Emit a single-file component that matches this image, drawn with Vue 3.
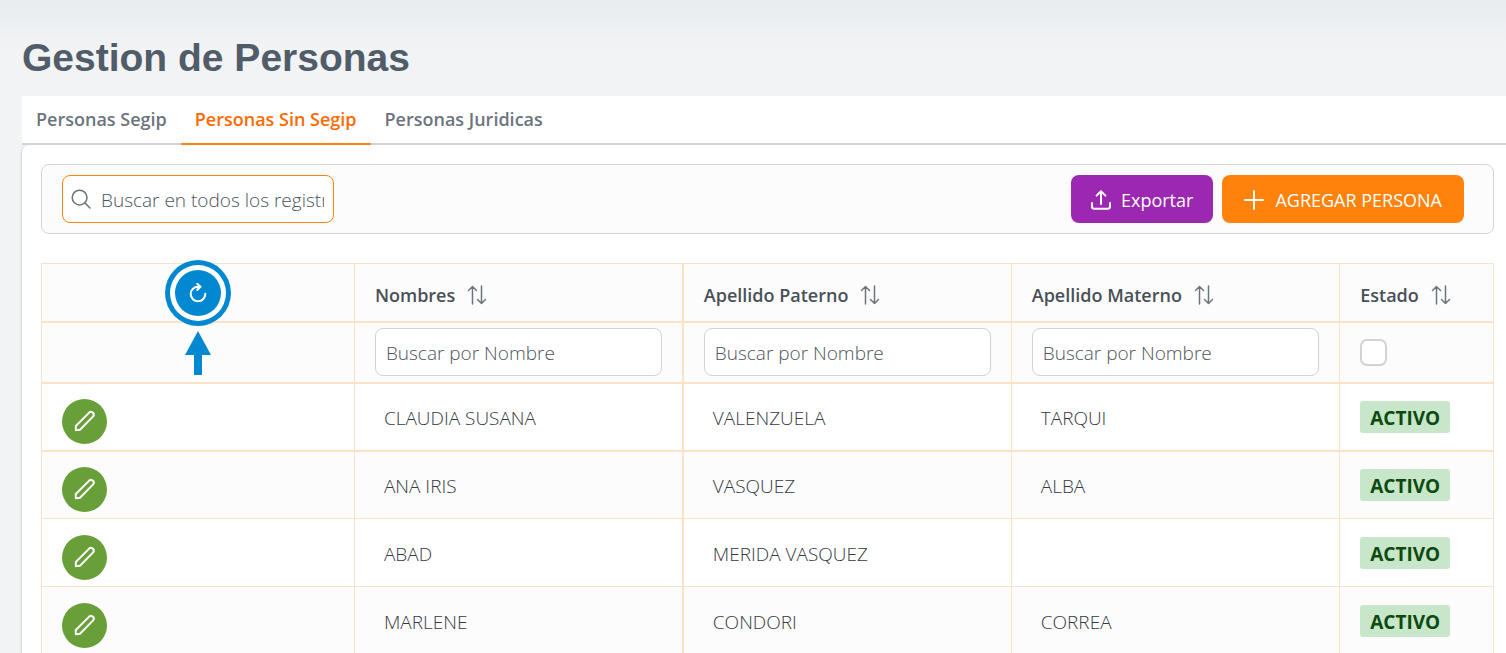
<script setup>
import { ref } from 'vue'

const tabs = ['Personas Segip', 'Personas Sin Segip', 'Personas Juridicas']
const active = ref(1)
const columns = ['Nombres', 'Apellido Paterno', 'Apellido Materno']
const rows = [
  ['CLAUDIA SUSANA', 'VALENZUELA', 'TARQUI'],
  ['ANA IRIS', 'VASQUEZ', 'ALBA'],
  ['ABAD', 'MERIDA VASQUEZ', ''],
  ['MARLENE', 'CONDORI', 'CORREA'],
]
</script>

<template>
  <main class="page">
    <h1>Gestion de Personas</h1>
    <nav class="tabs" role="tablist">
      <button
        v-for="(tab, i) in tabs"
        :key="tab"
        type="button"
        role="tab"
        class="tab"
        :class="{ active: active === i }"
        :aria-selected="active === i"
        @click="active = i"
      >{{ tab }}</button>
    </nav>
    <section class="card">
      <div class="toolbar">
        <label class="search">
          <svg width="20" height="20" viewBox="0 0 20 20" aria-hidden="true"><circle cx="8.6" cy="8.6" r="7.4" /><path d="M14 14l5 5" /></svg>
          <input type="text" aria-label="Buscar" placeholder="Buscar en todos los registros" />
        </label>
        <div class="actions">
          <button type="button" class="btn export">
            <svg width="20" height="20" viewBox="0 0 20 20" aria-hidden="true"><path d="M10 14V1.5M5.6 5.6L10 1.2l4.400 4.400M1 13v3.500q0 2.300 2.300 2.300h13.400q2.300 0 2.300-2.300V13" /></svg>
            Exportar
          </button>
          <button type="button" class="btn add">
            <svg width="20" height="20" viewBox="0 0 20 20" aria-hidden="true"><path d="M10 1v18M1 10h18" /></svg>
            AGREGAR PERSONA
          </button>
        </div>
      </div>

      <table>
        <colgroup>
          <col class="c-action" /><col class="c-name" /><col class="c-name" /><col class="c-name" /><col />
        </colgroup>
        <thead>
          <tr class="head">
            <th class="center">
              <button type="button" class="refresh" aria-label="Actualizar">
                <svg width="18" height="20" viewBox="0 0 18 20" aria-hidden="true"><path d="M16.300 10.800A7.300 7.300 0 1 1 9 3.700h2.500M8.200 0.800l3.200 2.900-3.200 3.300" /></svg>
              </button>
            </th>
            <th v-for="(c, i) in [...columns, 'Estado']" :key="c" scope="col" :class="{ thick: i === 0 }">
              <button type="button" class="sort">
                {{ c }}
                <svg width="20" height="20" viewBox="0 0 20 20" aria-hidden="true"><path d="M5.500 19V1.500M1.500 5.500l4-4 4 4M14.500 1v17.500M10.500 14.500l4 4 4-4" /></svg>
              </button>
            </th>
          </tr>
          <tr class="filter">
            <td class="center">
              <svg class="pointer" width="26" height="44" viewBox="0 0 26 44" aria-hidden="true"><path d="M13 0l13 24h-9v20H9V24H0z" /></svg>
            </td>
            <td v-for="(c, i) in columns" :key="c" :class="{ thick: i === 0 }">
              <input type="text" class="field" :aria-label="c" placeholder="Buscar por Nombre" />
            </td>
            <td><input type="checkbox" class="check" aria-label="Estado" /></td>
          </tr>
        </thead>
        <tbody>
          <tr v-for="row in rows" :key="row[0]">
            <td>
              <button type="button" class="edit" :aria-label="'Editar ' + row[0]">
                <svg width="22" height="22" viewBox="0 0 22 22" aria-hidden="true"><path d="M1.800 20.200v-4.200L15.200 2.600q1.400-1.200 3-.4 2.200 1.400 1.400 3.400-.2.500-.7 1L6 19.800z" /></svg>
              </button>
            </td>
            <td v-for="(value, i) in row" :key="i" class="value" :class="{ thick: i === 0 }">{{ value }}</td>
            <td><span class="tag">ACTIVO</span></td>
          </tr>
        </tbody>
      </table>
    </section>
  </main>
</template>

<style>
body {
  margin: 0;
  overflow: hidden;
}
</style>

<style scoped>
.page {
  box-sizing: border-box;
  height: 100vh;
  overflow: hidden;
  padding: 34px 0 0 22px;
  background: linear-gradient(#e8ecef 0, #f2f3f5 48px);
  color: #495057;
  font-family: "Open Sans", "Noto Sans", sans-serif;
  font-size: 18px;
}
* {
  box-sizing: border-box;
}
button,
input {
  font: inherit;
  color: inherit;
  margin: 0;
}
button {
  border: 0;
  padding: 0;
  background: none;
  cursor: pointer;
}
svg {
  flex: none;
  fill: none;
  stroke: currentColor;
  stroke-width: 2;
  stroke-linecap: round;
  stroke-linejoin: round;
}
h1 {
  margin: 0 0 14px;
  font: bold 39px/48px "Liberation Sans", Arial, sans-serif;
  color: #515c69;
}
.tabs {
  display: flex;
  height: 49px;
  background: #fff;
  border-bottom: 2px solid #d2d2d7;
}
.tab {
  height: 49px;
  padding: 0 14px 2px;
  border-bottom: 2px solid transparent;
  color: #6c757d;
  font-weight: 600;
}
.tab.active {
  color: #ff6a00;
  border-color: #ff820d;
}
.card {
  padding: 19px 12px 0 19px;
  min-height: 100%;
  background: #fff;
  border-radius: 8px 0 0 0;
  box-shadow: 0 1px 3px rgba(0, 0, 0, 0.25);
  clip-path: inset(0 0 0 -4px);
}
.toolbar {
  display: flex;
  align-items: center;
  justify-content: space-between;
  padding: 10px 29px 10px 20px;
  margin-bottom: 29px;
  background: #fcfcfc;
  border: 1px solid #d4d4d8;
  border-radius: 8px;
}
.search {
  display: flex;
  align-items: center;
  width: 272px;
  height: 48px;
  padding: 0 9px 0 8px;
  gap: 10px;
  background: #fff;
  border: 1px solid #ff820d;
  border-radius: 8px;
  color: #6c757d;
}
.search svg {
  stroke-width: 1.500;
}
.search input {
  flex: 1;
  min-width: 0;
  padding: 2px 0 0;
  border: 0;
  outline: 0;
  background: none;
}
.search input,
.field {
  font-size: 19px;
  font-weight: 300;
}
input::placeholder {
  color: #4c555d;
  opacity: 1;
}
.actions {
  display: flex;
  gap: 9px;
}
.btn {
  display: flex;
  align-items: center;
  gap: 10px;
  height: 48px;
  padding: 2px 20px 0;
  border-radius: 8px;
  color: #fff;
}
.export {
  background: #9c27b0;
}
.add {
  gap: 11px;
  padding: 2px 22px 0;
  background: #ff820d;
}
table {
  width: 100%;
  table-layout: fixed;
  border-collapse: collapse;
}
.c-action {
  width: 21.550%;
}
.c-name {
  width: 22.620%;
}
th,
td {
  padding: 0 20px;
  border: 1px solid #fde2c8;
  text-align: left;
}
.thick {
  border-right-width: 2px;
}
.head {
  height: 58px;
  background: #fcfcfc;
}
.head th,
.filter td {
  border-bottom-width: 2px;
}
.filter {
  height: 61px;
  background: #fcfcfc;
}
tbody tr {
  height: 68px;
}
tbody tr:first-child td {
  border-bottom-width: 2px;
}
tbody tr:nth-child(even) {
  background: #fcfcfc;
}
.center {
  text-align: center;
}
.sort {
  display: flex;
  align-items: center;
  gap: 12px;
  padding-top: 5px;
  font-weight: 600;
  white-space: nowrap;
}
.sort svg {
  stroke-width: 1.500;
  color: #6c757d;
}
.refresh {
  display: inline-flex;
  align-items: center;
  justify-content: center;
  vertical-align: middle;
  width: 46px;
  height: 46px;
  margin-top: 2px;
  border-radius: 50%;
  color: #fff;
  background: #0288d1;
  box-shadow: 0 0 0 5px #fff, 0 0 0 10px #0288d1;
}
.pointer {
  display: block;
  margin: 2px auto 0;
  fill: #0288d1;
  stroke: none;
}
.field {
  display: block;
  width: 100%;
  height: 48px;
  padding: 2px 10px 0;
  background: #fff;
  border: 1px solid #d1d1d6;
  border-radius: 8px;
}
.check {
  display: block;
  appearance: none;
  width: 27px;
  height: 27px;
  background: #fff;
  border: 2px solid #d1d1d6;
  border-radius: 7px;
}
.edit {
  display: flex;
  align-items: center;
  justify-content: center;
  width: 45px;
  height: 45px;
  margin-top: 9px;
  border-radius: 50%;
  color: #fff;
  background: #689f38;
}
.value {
  padding: 2px 29px 0;
  font-size: 19px;
  font-weight: 300;
  color: #343a40;
}
.tag {
  display: inline-block;
  padding: 2px 10px 0;
  border-radius: 3px;
  background: #c8e6c9;
  color: #0c4a10;
  font-size: 19px;
  font-weight: 700;
  line-height: 30px;
}
</style>
